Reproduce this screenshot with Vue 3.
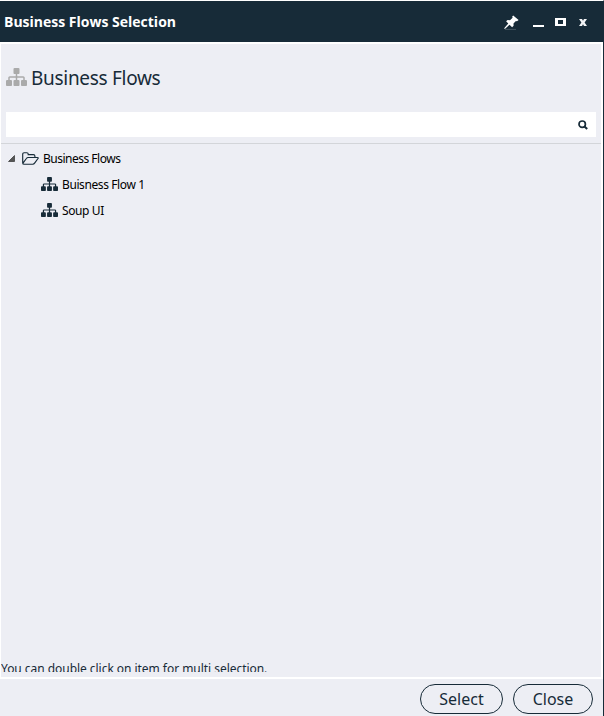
<script setup>
import { h } from 'vue'

const flows = ['Buisness Flow 1', 'Soup UI']

const SitemapIcon = () =>
  h('svg', { viewBox: '0 0 1792 1536', fill: 'currentColor', preserveAspectRatio: 'none' }, [
    h('path', {
      d: 'M1792 1120v320q0 40-28 68t-68 28h-320q-40 0-68-28t-28-68v-320q0-40 28-68t68-28h96V832H960v192h96q40 0 68 28t28 68v320q0 40-28 68t-68 28H736q-40 0-68-28t-28-68v-320q0-40 28-68t68-28h96V832H320v192h96q40 0 68 28t28 68v320q0 40-28 68t-68 28H96q-40 0-68-28t-28-68v-320q0-40 28-68t68-28h96V832q0-52 38-90t90-38h512V512h-96q-40 0-68-28t-28-68V96q0-40 28-68t68-28h320q40 0 68 28t28 68v320q0 40-28 68t-68 28h-96v192h512q52 0 90 38t38 90v192h96q40 0 68 28t28 68z'
    })
  ])
</script>

<template>
  <div class="window">
    <header class="titlebar">
      <span class="title">Business Flows Selection</span>
      <div class="controls">
        <svg class="pin" viewBox="0 0 15 15">
          <path d="M9.2 0.4 14.6 5 13 6.3 11.9 6 9.5 8.5 9.6 10.8 8.1 12.3 5.5 9.8 1.2 13.8 0.2 14 0.6 12.8 4.3 8.6 2.1 6.3 3.6 5.1 6 5.2 8.6 2.8 8.2 1.5z" fill="#fff" />
          <path d="M1 14.4h11" stroke="#596973" stroke-width=".7" />
        </svg>
        <svg class="minimize" viewBox="0 0 11 3"><path d="M0 0h11v2H0z" fill="#fff" /></svg>
        <svg class="maximize" viewBox="0 0 11 8"><path d="M0 0h11v8H0zM3 2v4h5V2z" fill="#fff" fill-rule="evenodd" /></svg>
        <svg class="dismiss" viewBox="0 0 8 7"><path d="M0 0h3l1 1.7L5 0h3L5.6 3.5 8 7H5L4 5.3 3 7H0l2.4-3.5z" fill="#f2f3f5" /></svg>
      </div>
    </header>
    <main class="panel">
      <div class="heading">
        <SitemapIcon class="heading-icon" />
        <h1>Business Flows</h1>
      </div>
      <div class="search">
        <svg viewBox="0 0 10 10">
          <circle cx="4.2" cy="4.2" r="3.2" fill="none" stroke="#172b38" stroke-width="1.7" />
          <path d="m6.5 6.6 2.7 2.5" stroke="#172b38" stroke-width="2" />
        </svg>
      </div>
      <div class="tree">
        <div class="node root">
          <svg class="arrow" viewBox="0 0 7 7"><path d="M6.5.5v6h-6z" fill="#555" stroke="#333" stroke-width=".7" /></svg>
          <svg class="folder" viewBox="0 0 17 13">
            <path d="M.7 11V2.2Q.7.7 2.1.7h2.7q1.4 0 1.4 1.4v.5h5.2q1.5 0 1.5 1.5v1.4M.8 11.4l3.6-4.9q.7-1 1.7-1h9.3q1.3 0 .6 1l-3.2 4.4q-.9 1.3-2.1 1.3H2.1Q.7 12.2.7 10.9" fill="none" stroke="#172b38" stroke-width="1.15" />
          </svg>
          <span class="root-label">Business Flows</span>
        </div>
        <div v-for="flow in flows" :key="flow" class="node child">
          <SitemapIcon class="flow-icon" />
          <span class="flow-label">{{ flow }}</span>
        </div>
      </div>
      <p class="hint"><span>You can double click on item for multi selection.</span></p>
    </main>
    <footer class="footer">
      <button class="select"><span>Select</span></button>
      <button class="close"><span>Close</span></button>
    </footer>
  </div>
</template>

<style>
body { margin: 0; overflow: hidden; background: #fff; }
</style>

<style scoped>
* { box-sizing: border-box; }
.window {
  width: 604px; height: 716px; display: flex; flex-direction: column;
  border-top: 1px solid #fff; border-right: 1px solid #172b38;
  background: #edeef4; color: #172b38; overflow: hidden;
  font-family: "Noto Sans", "Open Sans", sans-serif;
}
.titlebar {
  height: 41px; flex: none; margin-right: -1px; padding: 0 17px 0 4px;
  display: flex; justify-content: space-between; align-items: center;
  background: #172b38; color: #fff;
}
.title { font: bold 14px/20px "Open Sans", sans-serif; white-space: nowrap; }
.controls { display: flex; align-items: center; height: 41px; }
.controls svg { display: block; flex: none; }
.pin { width: 15px; height: 15px; margin: 1px 14px 0 0; }
.minimize { width: 11px; height: 3px; margin: 9px 11px 0 0; }
.maximize { width: 11px; height: 8px; margin: 1px 13px 0 0; }
.dismiss { width: 8px; height: 7px; margin-top: 2px; }
.panel {
  height: 637px; flex: none; display: flex; flex-direction: column;
  border: 2px solid #fff; border-left-width: 1px;
}
.heading { height: 68px; flex: none; display: flex; align-items: center; padding-left: 5px; }
.heading-icon { width: 21px; height: 18px; margin: -2px 4px 0 0; color: #aaa; }
h1 { margin: 0; font: 400 19px/28px "Noto Sans", sans-serif; letter-spacing: -.3px; white-space: nowrap; }
.search {
  height: 25px; flex: none; margin: 0 5px; padding-right: 8px; background: #fff;
  display: flex; align-items: center; justify-content: flex-end;
}
.search svg { width: 10px; height: 10px; }
.tree { flex: 1; margin-top: 6px; border-top: 1px solid #d3d5d9; padding-top: 1px; color: #000; font-size: 12px; }
.node { height: 26px; display: flex; align-items: center; white-space: nowrap; }
.root { padding-left: 7px; }
.child { padding-left: 40px; }
.arrow { width: 7px; height: 7px; margin-right: 7px; }
.folder { width: 17px; height: 13px; margin-right: 4px; }
.flow-icon { width: 17px; height: 14px; margin-right: 4px; color: #172b38; }
.root-label { letter-spacing: -.5px; }
.flow-label { letter-spacing: -.4px; }
.hint { height: 9px; flex: none; margin: 0 0 5px; overflow: hidden; font-size: 12px; line-height: 16px; letter-spacing: -.04px; white-space: nowrap; }
.hint span { display: block; margin-top: -2px; }
.footer { height: 37px; flex: none; display: flex; justify-content: flex-end; gap: 10px; padding: 5px 10px 0 0; }
button {
  height: 30px; padding: 0; border: 1px solid #172b38; border-radius: 15px;
  background: transparent; color: #172b38; font: 16px/28px "Noto Sans", sans-serif;
}
.select { width: 83px; }
.close { width: 80px; }
</style>
